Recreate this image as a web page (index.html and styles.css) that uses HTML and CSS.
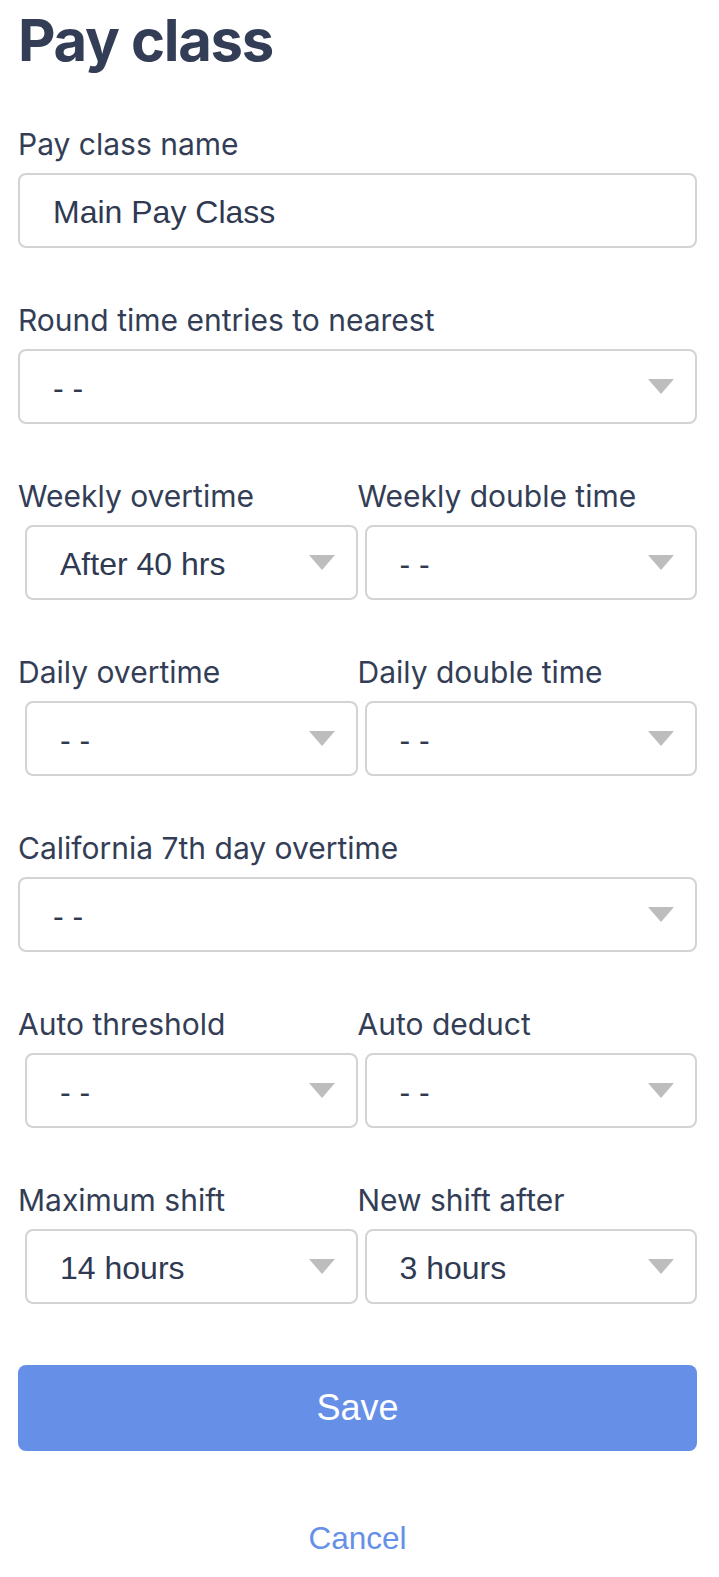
FILE: index.html
```html
<!DOCTYPE html>
<html lang="en">
<head>
    <meta charset="UTF-8">
    <meta name="viewport" content="width=device-width, initial-scale=1.0">
    <title>Pay class</title>
    <link rel="stylesheet" href="styles.css">
</head>
<body>
    <h1>Pay class</h1>
    <form class="pay-form">
        <div class="field">
            <label>Pay class name</label>
            <div class="box">Main Pay Class</div>
        </div>

        <div class="field">
            <label>Round time entries to nearest</label>
            <div class="box select"><span>- -</span><i class="caret"></i></div>
        </div>

        <div class="row">
            <div class="field half">
                <label>Weekly overtime</label>
                <div class="box select"><span>After 40 hrs</span><i class="caret"></i></div>
            </div>
            <div class="field half">
                <label>Weekly double time</label>
                <div class="box select"><span>- -</span><i class="caret"></i></div>
            </div>
        </div>

        <div class="row">
            <div class="field half">
                <label>Daily overtime</label>
                <div class="box select"><span>- -</span><i class="caret"></i></div>
            </div>
            <div class="field half">
                <label>Daily double time</label>
                <div class="box select"><span>- -</span><i class="caret"></i></div>
            </div>
        </div>

        <div class="field">
            <label>California 7th day overtime</label>
            <div class="box select"><span>- -</span><i class="caret"></i></div>
        </div>

        <div class="row">
            <div class="field half">
                <label>Auto threshold</label>
                <div class="box select"><span>- -</span><i class="caret"></i></div>
            </div>
            <div class="field half">
                <label>Auto deduct</label>
                <div class="box select"><span>- -</span><i class="caret"></i></div>
            </div>
        </div>

        <div class="row">
            <div class="field half">
                <label>Maximum shift</label>
                <div class="box select"><span>14 hours</span><i class="caret"></i></div>
            </div>
            <div class="field half">
                <label>New shift after</label>
                <div class="box select"><span>3 hours</span><i class="caret"></i></div>
            </div>
        </div>

        <button type="button" class="save">Save</button>
        <a class="cancel" href="#">Cancel</a>
    </form>
</body>
</html>
```

FILE: styles.css
```css
body {
    margin: 0;
    padding: 0 22px 0 18px;
    background: #fff;
    color: #333e56;
    font-family: Inter, "Noto Sans", sans-serif;
}
h1 {
    margin: 5px 0 53px;
    font-size: 58px;
    line-height: 70px;
    font-weight: 700;
    letter-spacing: -1.3px;
}
.pay-form {
    display: flex;
    flex-direction: column;
}
.row {
    display: grid;
    grid-template-columns: 1fr 1fr;
}
.field {
    display: flex;
    flex-direction: column;
    margin-bottom: 56px;
}
.field label {
    font-size: 30px;
    line-height: 32px;
    margin-bottom: 13px;
}
.box {
    box-sizing: border-box;
    height: 75px;
    display: flex;
    align-items: center;
    padding: 4px 21px 0 33px;
    border: 2px solid #d3d3d3;
    border-radius: 8px;
    font-family: "Liberation Sans", Arial, sans-serif;
    font-size: 32px;
    color: #2f3a52;
}
.half .box {
    margin-left: 7px;
}
.select {
    justify-content: space-between;
}
.caret {
    width: 0;
    height: 0;
    margin-top: -4px;
    border-left: 13.5px solid transparent;
    border-right: 13.5px solid transparent;
    border-top: 15px solid #bdbdbd;
}
.save {
    margin-top: 5px;
    height: 86px;
    border: none;
    border-radius: 8px;
    background-color: #6690e8;
    color: #fff;
    font-family: "Liberation Sans", Arial, sans-serif;
    font-size: 36px;
}
.cancel {
    margin-top: 69px;
    align-self: center;
    font-family: "Liberation Sans", Arial, sans-serif;
    font-size: 31.5px;
    line-height: 36px;
    color: #6690e8;
    text-decoration: none;
}
```
